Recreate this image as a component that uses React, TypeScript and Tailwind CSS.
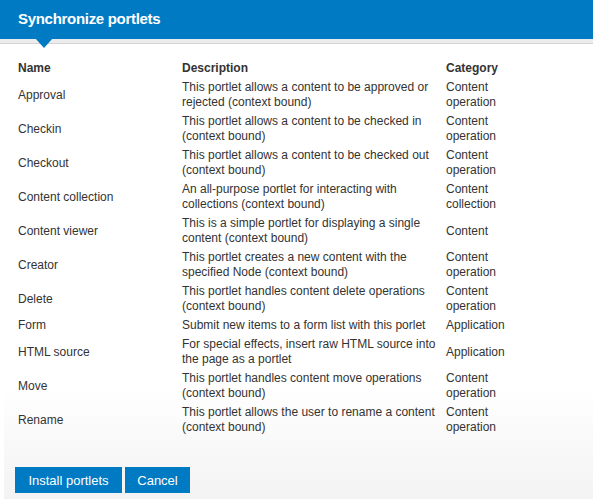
import React from "react";

interface Portlet {
  name: string;
  description: string;
  category: string;
}

const portlets: Portlet[] = [
  { name: "Approval", description: "This portlet allows a content to be approved or rejected (context bound)", category: "Content operation" },
  { name: "Checkin", description: "This portlet allows a content to be checked in (context bound)", category: "Content operation" },
  { name: "Checkout", description: "This portlet allows a content to be checked out (context bound)", category: "Content operation" },
  { name: "Content collection", description: "An all-purpose portlet for interacting with collections (context bound)", category: "Content collection" },
  { name: "Content viewer", description: "This is a simple portlet for displaying a single content (context bound)", category: "Content" },
  { name: "Creator", description: "This portlet creates a new content with the specified Node (context bound)", category: "Content operation" },
  { name: "Delete", description: "This portlet handles content delete operations (context bound)", category: "Content operation" },
  { name: "Form", description: "Submit new items to a form list with this porlet", category: "Application" },
  { name: "HTML source", description: "For special effects, insert raw HTML source into the page as a portlet", category: "Application" },
  { name: "Move", description: "This portlet handles content move operations (context bound)", category: "Content operation" },
  { name: "Rename", description: "This portlet allows the user to rename a content (context bound)", category: "Content operation" },
];

export default function App() {
  return (
    <div className="w-[593px] h-[499px] bg-white overflow-hidden text-[12px] leading-[15px] text-[#333333] font-['Liberation_Sans',Arial,sans-serif]">
      {/* Header */}
      <div className="relative">
        <div className="h-[39px] bg-[#007bc3] pl-[18px] pt-[9px]">
          <h1 className="text-[15px] leading-[20px] font-bold text-white tracking-[-0.3px]">
            Synchronize portlets
          </h1>
        </div>
        <div className="h-[5px] bg-[#ececec] border-b border-[#d4d4d4]" />
        <div className="absolute left-[35px] top-[38px] w-0 h-0 border-l-[9px] border-r-[9px] border-t-[10px] border-l-transparent border-r-transparent border-t-[#007bc3]" />
      </div>

      {/* Body */}
      <div className="pl-[4px] h-[455px]">
        <div className="h-full bg-gradient-to-b from-white from-75% to-[#f3f3f3] pl-[14px] pt-[17px]">
          <div className="grid grid-cols-[164px_264px_auto]">
            <div className="font-bold pb-[2px]">Name</div>
            <div className="font-bold pb-[2px]">Description</div>
            <div className="font-bold pb-[2px]">Category</div>
            {portlets.map((p) => (
              <React.Fragment key={p.name}>
                <div className="flex items-center py-[2px]">{p.name}</div>
                <div className="flex items-center py-[2px] pr-[2px]">{p.description}</div>
                <div className="flex items-center py-[2px] w-[70px]">{p.category}</div>
              </React.Fragment>
            ))}
          </div>

          <div className="flex gap-[3px] mt-[30px] -ml-[3px]">
            <button type="button" className="h-[26px] w-[107px] bg-[#007bc3] text-white text-[13px]">
              Install portlets
            </button>
            <button type="button" className="h-[26px] w-[65px] bg-[#007bc3] text-white text-[13px]">
              Cancel
            </button>
          </div>
        </div>
      </div>
    </div>
  );
}
